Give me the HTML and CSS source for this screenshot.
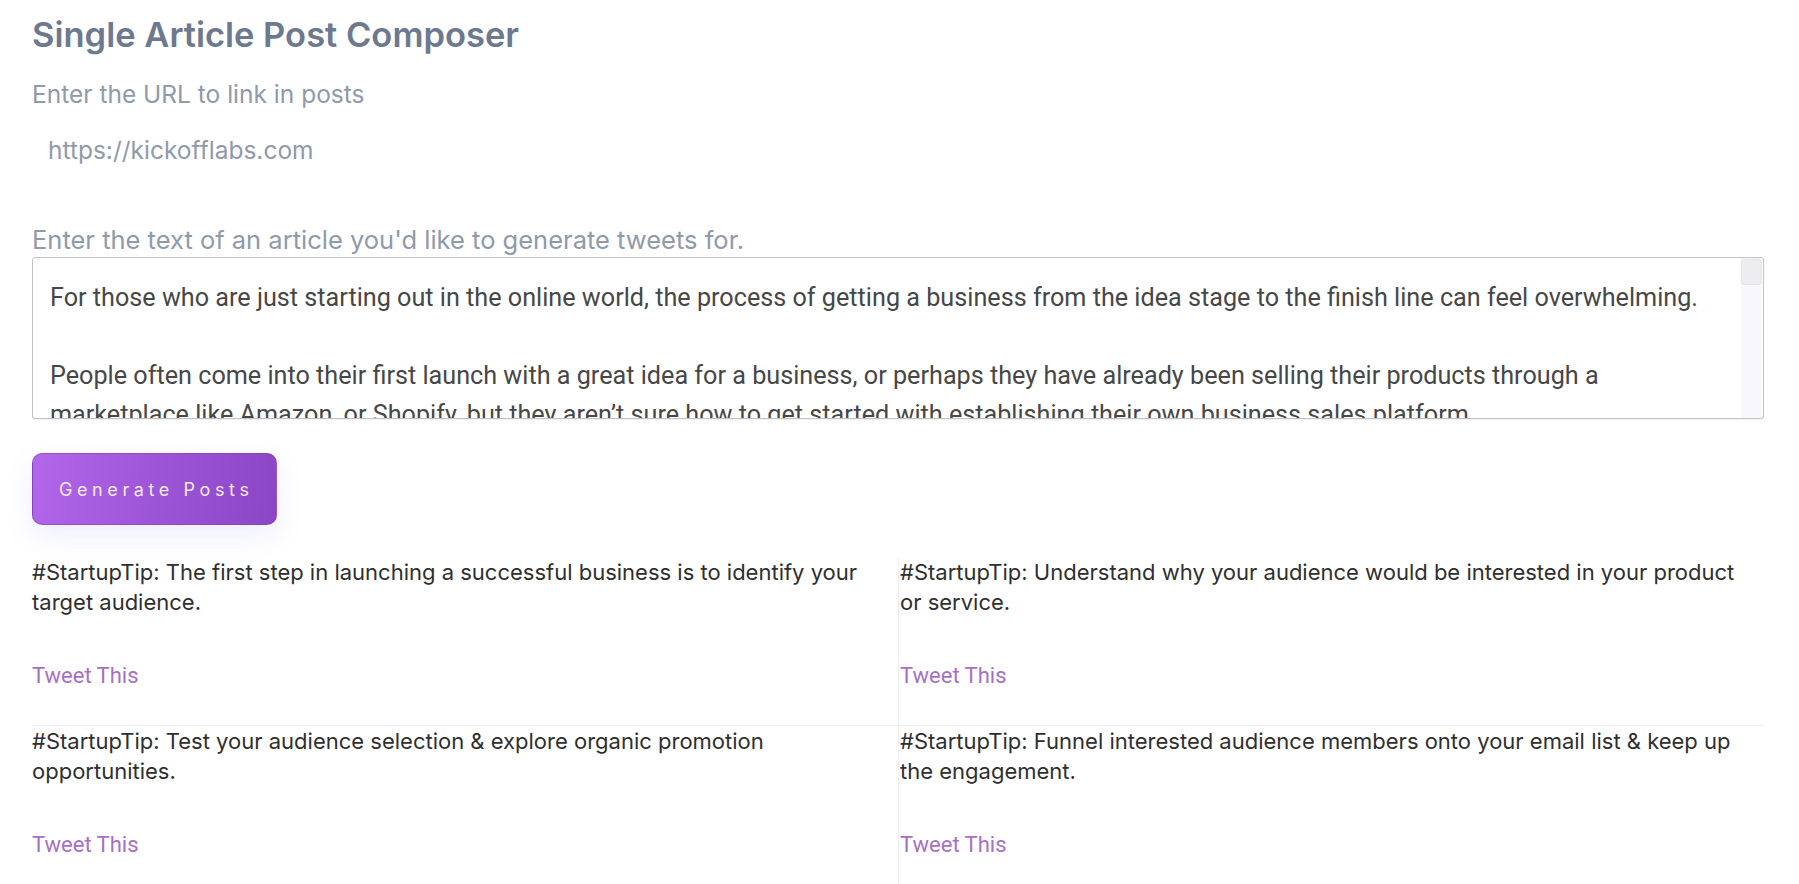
FILE: index.html
```html
<!DOCTYPE html>
<html lang="en">
<head>
<meta charset="utf-8">
<title>Single Article Post Composer</title>
<link rel="stylesheet" href="styles.css">
</head>
<body>
<main class="page">
  <h1 class="title">Single Article Post Composer</h1>

  <label class="label label-url" for="url">Enter the URL to link in posts</label>
  <input id="url" class="url-input" type="text" value="https://kickofflabs.com">

  <label class="label label-article" for="article">Enter the text of an article you'd like to generate tweets for.</label>
  <div class="article-box">
    <textarea id="article" class="article">For those who are just starting out in the online world, the process of getting a business from the idea stage to the finish line can feel overwhelming.

People often come into their first launch with a great idea for a business, or perhaps they have already been selling their products through a marketplace like Amazon, or Shopify, but they aren’t sure how to get started with establishing their own business sales platform.

The first step in launching a successful business is to identify your target audience. Understand why your audience would be interested in your product or service, and what problem it solves for them.

Once you know who you are talking to, test your audience selection and explore organic promotion opportunities before you spend money on advertising.

Finally, funnel interested audience members onto your email list and keep up the engagement, so that when launch day arrives you already have a group of people waiting to buy.</textarea>
    <div class="scrollbar" aria-hidden="true"><div class="scrollbar-thumb"></div></div>
  </div>

  <button class="generate" type="button">Generate Posts</button>

  <section class="tweets">
    <div class="tweet">
      <p class="tweet-text">#StartupTip: The first step in launching a successful business is to identify your target audience.</p>
      <a class="tweet-link" href="#">Tweet This</a>
    </div>
    <div class="tweet">
      <p class="tweet-text">#StartupTip: Understand why your audience would be interested in your product or service.</p>
      <a class="tweet-link" href="#">Tweet This</a>
    </div>
    <div class="tweet">
      <p class="tweet-text">#StartupTip: Test your audience selection &amp; explore organic promotion opportunities.</p>
      <a class="tweet-link" href="#">Tweet This</a>
    </div>
    <div class="tweet">
      <p class="tweet-text">#StartupTip: Funnel interested audience members onto your email list &amp; keep up the engagement.</p>
      <a class="tweet-link" href="#">Tweet This</a>
    </div>
  </section>
</main>
</body>
</html>
```
FILE: styles.css
```css
* { box-sizing: border-box; }

html, body {
  margin: 0;
  background: #ffffff;
}

body {
  font-family: "Inter", "Open Sans", sans-serif;
  color: #303030;
  overflow: hidden;
}

.page {
  padding: 15px 35px 0 32px;
  display: flex;
  flex-direction: column;
  align-items: stretch;
}

.title {
  margin: 0;
  font-size: 34.5px;
  line-height: 40px;
  font-weight: 600;
  color: #6d798f;
}

.label {
  display: block;
  font-size: 25.5px;
  line-height: 27px;
  font-weight: 400;
  color: #8f9aaa;
}

.label-url {
  margin-top: 26px;
  font-size: 24.5px;
}

.url-input {
  margin-top: 19px;
  height: 46px;
  padding: 8px 16px;
  border: 0;
  outline: none;
  background: transparent;
  font-family: "Inter", "Open Sans", sans-serif;
  font-size: 24.5px;
  line-height: 30px;
  color: #8f9aab;
  width: 100%;
}

.label-article {
  margin-top: 53px;
}

.article-box {
  position: relative;
  height: 162px;
  margin-top: 4px;
}

.article {
  display: block;
  width: 100%;
  height: 162px;
  margin: 0;
  padding: 20px 48px 0 17px;
  border: 1px solid #c3c3c6;
  border-radius: 3px;
  box-shadow: 0 1px 1px rgba(0, 0, 0, 0.06);
  font-family: "Roboto", "Liberation Sans", sans-serif;
  font-size: 25.2px;
  line-height: 39px;
  font-weight: 400;
  color: #474747;
  resize: none;
  outline: none;
  overflow: hidden;
  background: #fff;
}

.scrollbar {
  position: absolute;
  top: 1px;
  right: 2px;
  bottom: 1px;
  width: 21px;
  background: #f8f8fc;
  padding-top: 1px;
}

.scrollbar-thumb {
  height: 26px;
  background: #ececf1;
  border: 1px solid #e5e5eb;
  border-radius: 3px;
}

.generate {
  align-self: flex-start;
  margin-top: 34px;
  height: 72px;
  padding: 0 22px 0 26px;
  display: inline-flex;
  align-items: center;
  border: 1px solid rgba(125, 60, 180, 0.45);
  border-radius: 10px;
  background: linear-gradient(100deg, #b367ea 0%, #9d55d8 50%, #8a46c5 100%);
  box-shadow: 0 10px 28px rgba(115, 120, 240, 0.13);
  font-family: "Inter", "Open Sans", sans-serif;
  font-size: 18px;
  font-weight: 400;
  letter-spacing: 4.6px;
  color: #f7e9fd;
  cursor: pointer;
}

.tweets {
  margin-top: 32px;
  display: grid;
  grid-template-columns: 1fr 1fr;
}

.tweet {
  padding: 0 10px 34px 0;
  display: flex;
  flex-direction: column;
  align-items: flex-start;
}

.tweet:nth-child(1),
.tweet:nth-child(2) {
  border-bottom: 1px solid #efeff2;
}

.tweet:nth-child(2n) {
  border-left: 1px solid #efeff2;
  padding-left: 1px;
}

.tweet-text {
  margin: 0;
  font-size: 22px;
  line-height: 30px;
  font-weight: 400;
  color: #2f2f2f;
}

.tweet-link {
  margin-top: 44px;
  font-family: "Roboto", "Liberation Sans", sans-serif;
  font-size: 22px;
  line-height: 30px;
  color: #a86fc9;
  text-decoration: none;
}
```
